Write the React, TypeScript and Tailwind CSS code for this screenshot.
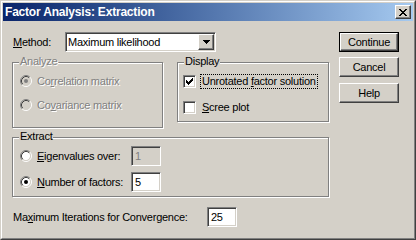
import React from "react";

// classic 3D edges
const raised =
  "border border-t-white border-l-white border-r-[#404040] border-b-[#404040] shadow-[inset_-1px_-1px_0_#808080]";
const sunken =
  "border border-t-[#808080] border-l-[#808080] border-r-white border-b-white shadow-[inset_1px_1px_0_#404040,inset_-1px_-1px_0_#d4d0c8]";
const etched =
  "border border-[#808080] shadow-[inset_1px_1px_0_#fff,1px_1px_0_#fff]";
const grayText = "text-[#808080] [text-shadow:1px_1px_0_#fff]";

function Radio({ checked, disabled }: { checked?: boolean; disabled?: boolean }) {
  return (
    <svg width="12" height="12" viewBox="0 0 12 12" className="shrink-0">
      <circle cx="6" cy="6" r="4.2" fill={disabled ? "#d4d0c8" : "#fff"} />
      <path d="M2.11 9.89A5.5 5.5 0 0 1 9.89 2.11" stroke="#808080" fill="none" />
      <path d="M9.89 2.11A5.5 5.5 0 0 1 2.11 9.89" stroke="#fff" fill="none" />
      <path d="M2.82 9.18A4.5 4.5 0 0 1 9.18 2.82" stroke="#404040" fill="none" />
      <path d="M9.18 2.82A4.5 4.5 0 0 1 2.82 9.18" stroke="#d4d0c8" fill="none" />
      {checked && <circle cx="6" cy="6" r="2" fill={disabled ? "#808080" : "#000"} />}
    </svg>
  );
}

function Check({ checked }: { checked?: boolean }) {
  return (
    <div className={`w-[13px] h-[13px] shrink-0 bg-white pl-[2px] pt-[2px] ${sunken}`}>
      {checked && (
        <svg width="7" height="7" viewBox="0 0 7 7" shapeRendering="crispEdges" className="block">
          <path d="M6 0h1v1H6zM5 1h2v1H5zM0 2h1v1H0zM4 2h3v1H4zM0 3h2v1H0zM3 3h3v1H3zM0 4h5v1H0zM1 5h3v1H1zM2 6h1v1H2z" fill="#000" />
        </svg>
      )}
    </div>
  );
}

function Group({
  label,
  disabled,
  className,
  children,
}: {
  label: string;
  disabled?: boolean;
  className?: string;
  children: React.ReactNode;
}) {
  return (
    <div className={`relative ${etched} ${className ?? ""}`}>
      <span
        className={`absolute -top-[8px] left-[6px] px-px bg-[#d4d0c8] leading-[13px] ${disabled ? grayText : ""}`}
      >
        {label}
      </span>
      {children}
    </div>
  );
}

function Field({ value, disabled }: { value: string; disabled?: boolean }) {
  return (
    <div
      className={`w-[30px] h-[20px] flex items-center pl-[3px] ${sunken} ${disabled ? "bg-[#d4d0c8] text-[#808080]" : "bg-white"}`}
    >
      {value}
    </div>
  );
}

function Btn({ children, isDefault }: { children: React.ReactNode; isDefault?: boolean }) {
  const inner = (
    <div className={`h-full flex items-center justify-center bg-[#d4d0c8] ${raised}`}>{children}</div>
  );
  return (
    <div className={`w-[60px] h-[20px] ${isDefault ? "border border-black" : ""}`}>{inner}</div>
  );
}

export default function App() {
  return (
    <div className="w-[416px] h-[240px] bg-[#d4d0c8] border border-t-[#d4d0c8] border-l-[#d4d0c8] border-r-[#404040] border-b-[#404040] font-['Liberation_Sans',Arial,sans-serif] text-[11px] tracking-[-0.25px] text-black select-none">
      <div className="h-full border border-t-white border-l-white border-r-[#808080] border-b-[#808080] p-px flex flex-col">
        {/* title bar */}
        <div className="h-[18px] flex items-center pl-[2px] pr-[2px] bg-linear-to-r from-[#0a246a] to-[#a6caf0]">
          <span className="flex-1 text-white font-bold text-[12px] tracking-[-0.2px]">
            Factor Analysis: Extraction
          </span>
          <div className={`w-[16px] h-[14px] flex items-center justify-center bg-[#d4d0c8] ${raised}`}>
            <svg width="8" height="7" viewBox="0 0 8 7" shapeRendering="crispEdges">
              <path
                d="M0 0h2v1H0zM6 0h2v1H6zM1 1h2v1H1zM5 1h2v1H5zM2 2h4v1H2zM3 3h2v1H3zM2 4h4v1H2zM1 5h2v1H1zM5 5h2v1H5zM0 6h2v1H0zM6 6h2v1H6z"
                fill="#000"
              />
            </svg>
          </div>
        </div>

        <div className="flex-1 flex pl-[9px] pt-[11px]">
          <div className="w-[317px] flex flex-col">
            {/* method */}
            <div className="h-[20px] flex items-center">
              <span className="w-[53px] pl-px">
                <u>M</u>ethod:
              </span>
              <div className={`w-[151px] h-[20px] flex items-center bg-white ${sunken}`}>
                <span className="flex-1 pl-[2px]">Maximum likelihood</span>
                <div className={`w-[16px] h-[16px] mr-px flex items-center justify-center bg-[#d4d0c8] ${raised}`}>
                  <svg width="7" height="4" viewBox="0 0 7 4" shapeRendering="crispEdges">
                    <path d="M0 0h7v1H0zM1 1h5v1H1zM2 2h3v1H2zM3 3h1v1H3z" fill="#000" />
                  </svg>
                </div>
              </div>
            </div>

            {/* analyze + display */}
            <div className="mt-[10px] flex items-start gap-[14px]">
              <Group label="Analyze" disabled className="w-[151px] h-[66px] pl-[7px] pt-[10px]">
                <div className={`h-[16px] flex items-center gap-[5px] ${grayText}`}>
                  <Radio checked disabled />
                  <span>
                    Co<u>r</u>relation matrix
                  </span>
                </div>
                <div className={`mt-[8px] h-[16px] flex items-center gap-[5px] ${grayText}`}>
                  <Radio disabled />
                  <span>
                    Co<u>v</u>ariance matrix
                  </span>
                </div>
              </Group>
              <Group label="Display" className="w-[152px] h-[60px] pl-[5px] pt-[10px]">
                <div className="h-[16px] flex items-center gap-[4px]">
                  <Check checked />
                  <span className="border border-dotted border-black px-px leading-[13px]">
                    Unrotated <u>f</u>actor solution
                  </span>
                </div>
                <div className="mt-[10px] h-[16px] flex items-center gap-[6px]">
                  <Check />
                  <span>
                    <u>S</u>cree plot
                  </span>
                </div>
              </Group>
            </div>

            {/* extract */}
            <Group label="Extract" className="mt-[9px] h-[60px] pl-[7px] pt-[8px]">
              <div className="h-[20px] flex items-center">
                <Radio />
                <span className="ml-[5px] w-[94px]">
                  <u>E</u>igenvalues over:
                </span>
                <Field value="1" disabled />
              </div>
              <div className="mt-[6px] h-[20px] flex items-center">
                <Radio checked />
                <span className="ml-[5px] w-[94px]">
                  <u>N</u>umber of factors:
                </span>
                <Field value="5" />
              </div>
            </Group>

            {/* iterations */}
            <div className="mt-[10px] h-[20px] flex items-center">
              <span className="w-[195px] pl-px">
                Ma<u>x</u>imum Iterations for Convergence:
              </span>
              <Field value="25" />
            </div>
          </div>

          {/* buttons */}
          <div className="ml-[10px] flex flex-col">
            <Btn isDefault>Continue</Btn>
            <div className="mt-[5px]">
              <Btn>Cancel</Btn>
            </div>
            <div className="mt-[6px]">
              <Btn>Help</Btn>
            </div>
          </div>
        </div>
      </div>
    </div>
  );
}
